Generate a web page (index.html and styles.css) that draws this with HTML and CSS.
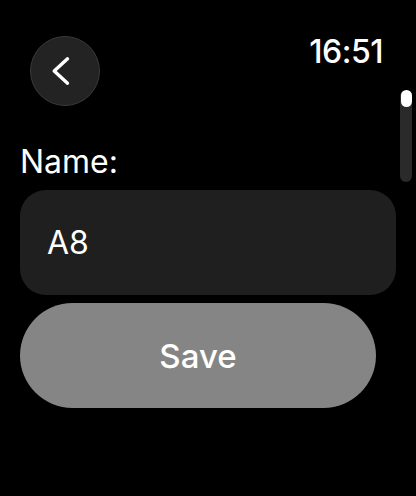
FILE: index.html
```html
<!DOCTYPE html>
<html lang="en">
<head>
<meta charset="utf-8">
<title>Name</title>
<link rel="stylesheet" href="styles.css">
</head>
<body>
<div class="screen">
  <div class="header">
    <button class="back" aria-label="Back">
      <svg width="32" height="32" viewBox="0 0 32 32">
        <path d="M18.5 3.8 L5.2 16 L18.5 28.2" fill="none" stroke="#fff" stroke-width="3.4" stroke-linecap="round" stroke-linejoin="round"/>
      </svg>
    </button>
    <div class="time">16:51</div>
  </div>
  <div class="content">
    <div class="label">Name:</div>
    <div class="field">A8</div>
    <button class="save">Save</button>
  </div>
  <div class="scroll"><div class="thumb"></div></div>
</div>
</body>
</html>
```
FILE: styles.css
```css
html, body {
  margin: 0;
  padding: 0;
  background: #000;
  width: 416px;
  height: 496px;
  overflow: hidden;
}
.screen {
  position: relative;
  width: 416px;
  height: 496px;
  font-family: Inter, "Noto Sans", sans-serif;
  color: #fff;
}
.header {
  display: flex;
  justify-content: space-between;
  align-items: flex-start;
  padding: 33px 33px 0 30px;
}
.back {
  margin-top: 3px;
  width: 70px;
  height: 70px;
  border-radius: 50%;
  background: #232323;
  border: 1.5px solid #3a3a3a;
  box-sizing: border-box;
  display: flex;
  align-items: center;
  justify-content: center;
  padding: 0;
}
.back svg { display: block; flex: none; }
.time {
  font-size: 32px;
  line-height: 38px;
  font-weight: 500;
  letter-spacing: -0.5px;
}
.content {
  padding: 0 20px;
  display: flex;
  flex-direction: column;
}
.label {
  margin-top: 37px;
  font-size: 32px;
  line-height: 38px;
  font-weight: 400;
}
.field {
  margin-top: 9px;
  height: 105px;
  border-radius: 26px;
  background: #1f1f1f;
  display: flex;
  align-items: center;
  padding-left: 27px;
  font-size: 32px;
  font-weight: 400;
}
.save {
  margin-top: 8px;
  width: 356px;
  height: 105px;
  border: none;
  border-radius: 53px;
  background: #858585;
  color: #fff;
  font-family: Inter, "Noto Sans", sans-serif;
  font-size: 33px;
  font-weight: 500;
  padding: 0;
}
.scroll {
  position: absolute;
  left: 400px;
  top: 90px;
  width: 12px;
  height: 92px;
  border-radius: 6px;
  background: #2a2a2a;
}
.thumb {
  margin: 0 auto;
  width: 11px;
  height: 17px;
  border-radius: 6px;
  background: #fff;
}
```
